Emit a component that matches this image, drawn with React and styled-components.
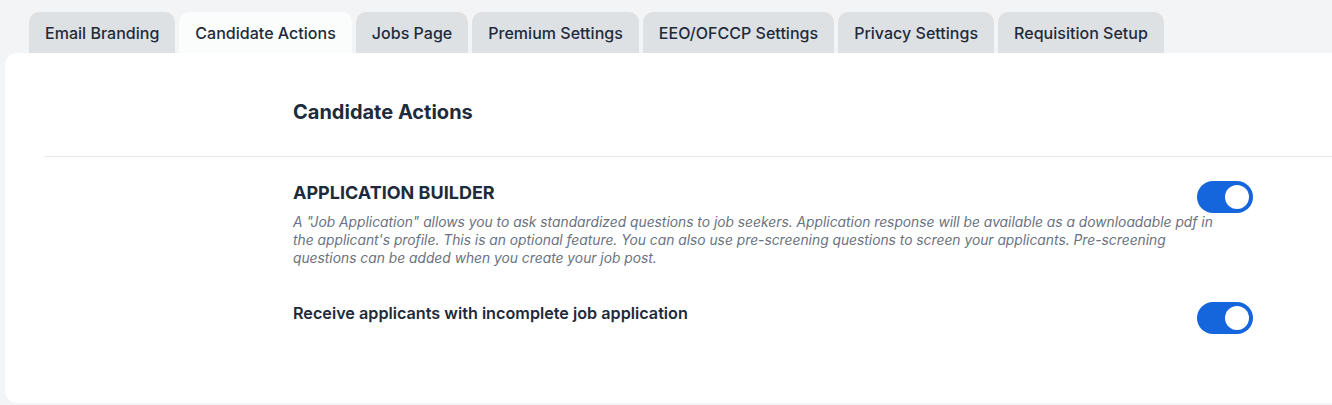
import React, { useState } from "react";
import styled, { createGlobalStyle } from "styled-components";

const GlobalStyle = createGlobalStyle`
    html, body {
        margin: 0;
        padding: 0;
        background: #f3f4f6;
        font-family: Inter, "Noto Sans", "Liberation Sans", sans-serif;
        color: #1f2937;
    }
`;

const tabs = [
    "Email Branding",
    "Candidate Actions",
    "Jobs Page",
    "Premium Settings",
    "EEO/OFCCP Settings",
    "Privacy Settings",
    "Requisition Setup",
];

const App = () => {
    const [active, setActive] = useState("Candidate Actions");
    const [builder, setBuilder] = useState(true);
    const [incomplete, setIncomplete] = useState(true);

    return (
        <>
            <GlobalStyle />
            <Page>
                <TabBar>
                    {tabs.map((tab) => (
                        <Tab
                            key={tab}
                            $active={tab === active}
                            onClick={() => setActive(tab)}
                        >
                            {tab}
                        </Tab>
                    ))}
                </TabBar>

                <Card>
                    <Header>
                        <Title>Candidate Actions</Title>
                    </Header>
                    <Divider />

                    <Section>
                        <SettingRow>
                            <SettingText>
                                <SectionHeading>APPLICATION BUILDER</SectionHeading>
                                <Description>
                                    A "Job Application" allows you to ask standardized
                                    questions to job seekers. Application response will
                                    be available as a downloadable pdf in the applicant's
                                    profile. This is an optional feature. You can also use
                                    pre-screening questions to screen your applicants.
                                    Pre-screening questions can be added when you create
                                    your job post.
                                </Description>
                            </SettingText>
                            <Toggle
                                $on={builder}
                                $top="-1px"
                                onClick={() => setBuilder(!builder)}
                            >
                                <Knob $on={builder} />
                            </Toggle>
                        </SettingRow>

                        <SettingRow $second>
                            <Label>Receive applicants with incomplete job application</Label>
                            <Toggle
                                $on={incomplete}
                                $top="1px"
                                onClick={() => setIncomplete(!incomplete)}
                            >
                                <Knob $on={incomplete} />
                            </Toggle>
                        </SettingRow>
                    </Section>
                </Card>
            </Page>
        </>
    );
};

const Page = styled.div`
    padding: 12px 0 0 5px;
    height: 405px;
    box-sizing: border-box;
    overflow: hidden;
`;

const TabBar = styled.div`
    display: flex;
    gap: 4px;
    padding-left: 24px;
`;

const Tab = styled.button`
    height: 41px;
    padding: 0 16px;
    border: none;
    border-radius: 10px 10px 0 0;
    background: ${(p) => (p.$active ? "#fbfcfc" : "#dee1e4")};
    color: #1e2b3b;
    font-family: inherit;
    font-size: 16px;
    font-weight: 500;
    letter-spacing: 0.02px;
    cursor: pointer;
`;

const Card = styled.div`
    background: #ffffff;
    border-radius: 12px 0 0 12px;
    height: 350px;
`;

const Header = styled.div`
    padding: 46px 0 31px 288px;
`;

const Title = styled.h2`
    margin: 0;
    font-size: 20px;
    line-height: 26px;
    font-weight: 700;
    color: #1e2b3b;
`;

const Divider = styled.div`
    margin-left: 39px;
    border-top: 1px solid #e5e7eb;
`;

const Section = styled.div`
    padding: 25px 0 0 288px;
    width: 960px;
`;

const SettingRow = styled.div`
    display: flex;
    justify-content: space-between;
    align-items: flex-start;
    margin-top: ${(p) => (p.$second ? "34px" : "0")};
`;

const SettingText = styled.div`
    width: 935px;
    margin-right: -935px;
`;

const SectionHeading = styled.h3`
    margin: 0 0 9px;
    font-size: 18px;
    line-height: 22px;
    font-weight: 700;
    color: #1e2b3b;
`;

const Description = styled.p`
    margin: 0;
    font-size: 13.8px;
    line-height: 18px;
    font-style: italic;
    color: #6b7280;
`;

const Label = styled.span`
    margin-top: 1px;
    font-size: 16.2px;
    line-height: 22px;
    font-weight: 600;
    color: #1e2b3b;
`;

const Toggle = styled.button`
    position: relative;
    flex-shrink: 0;
    margin-left: auto;
    margin-top: ${(p) => p.$top};
    width: 56px;
    height: 32px;
    padding: 0;
    border: none;
    border-radius: 16px;
    background: ${(p) => (p.$on ? "#1565dd" : "#d1d5db")};
    cursor: pointer;
`;

const Knob = styled.span`
    position: absolute;
    top: 4px;
    left: ${(p) => (p.$on ? "28px" : "4px")};
    width: 24px;
    height: 24px;
    border-radius: 50%;
    background: #ffffff;
`;

export default App;
